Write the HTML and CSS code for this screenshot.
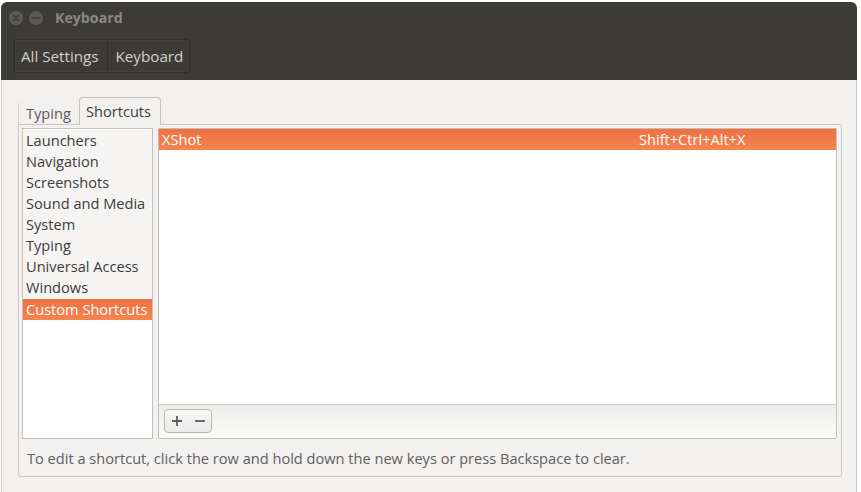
FILE: index.html
```html
<!DOCTYPE html>
<html lang="en">
<head>
<meta charset="utf-8">
<title>Keyboard</title>
<link rel="stylesheet" href="styles.css">
</head>
<body>
<div class="window">
  <header class="header">
    <div class="titlebar">
      <span class="wbtn" aria-label="Close">
        <svg width="14" height="14" viewBox="0 0 14 14"><path d="M4.5 4.5 L9.5 9.5 M9.5 4.5 L4.5 9.5" stroke="#3c3b37" stroke-width="1.6" stroke-linecap="round"/></svg>
      </span>
      <span class="wbtn" aria-label="Minimize">
        <svg width="14" height="14" viewBox="0 0 14 14"><path d="M3.5 7 L10.5 7" stroke="#3c3b37" stroke-width="1.6" stroke-linecap="round"/></svg>
      </span>
      <span class="title">Keyboard</span>
    </div>
    <div class="toolbar">
      <div class="crumbs">
        <span class="crumb">All Settings</span>
        <span class="crumb">Keyboard</span>
      </div>
    </div>
  </header>
  <main class="body">
    <div class="tabs">
      <span class="tab">Typing</span>
      <span class="tab active">Shortcuts</span>
    </div>
    <section class="page">
      <div class="content">
        <div class="sections">
          <div class="sec">Launchers</div>
          <div class="sec">Navigation</div>
          <div class="sec">Screenshots</div>
          <div class="sec">Sound and Media</div>
          <div class="sec">System</div>
          <div class="sec">Typing</div>
          <div class="sec">Universal Access</div>
          <div class="sec">Windows</div>
          <div class="sec-sep"></div>
          <div class="sec selected">Custom Shortcuts</div>
        </div>
        <div class="shortcuts">
          <div class="list">
            <div class="row selected"><span>XShot</span><span>Shift+Ctrl+Alt+X</span></div>
          </div>
          <div class="list-toolbar">
            <div class="btns">
              <span class="btn" aria-label="Add">
                <svg width="12" height="12" viewBox="0 0 12 12"><path d="M6 1 L6 11 M1 6 L11 6" stroke="#5c5c5c" stroke-width="1.8"/></svg>
              </span>
              <span class="btn" aria-label="Remove">
                <svg width="12" height="12" viewBox="0 0 12 12"><path d="M1 6 L11 6" stroke="#5c5c5c" stroke-width="1.8"/></svg>
              </span>
            </div>
          </div>
        </div>
      </div>
      <p class="hint">To edit a shortcut, click the row and hold down the new keys or press Backspace to clear.</p>
    </section>
  </main>
</div>
</body>
</html>
```

FILE: styles.css
```css
* { box-sizing: border-box; }
html, body {
  margin: 0;
  padding: 0;
  background: #ffffff;
  font-family: "Open Sans", "Noto Sans", sans-serif;
  font-size: 14.6px;
  color: #3c3c3c;
}
.window {
  margin: 2px 0 0 1px;
  width: 856px;
  height: 490px;
  display: flex;
  flex-direction: column;
}
.header {
  height: 78px;
  background: #3c3b37;
  border-radius: 6px 6px 0 0;
  display: flex;
  flex-direction: column;
}
.titlebar {
  height: 37px;
  display: flex;
  align-items: center;
  padding: 0 0 6px 8px;
}
.wbtn {
  width: 14px;
  height: 14px;
  border-radius: 50%;
  background: #5b5a56;
  display: flex;
  margin-right: 6px;
}
.title {
  margin-left: 6px;
  font-weight: bold;
  color: #8c8983;
  font-size: 14.2px;
}
.toolbar {
  display: flex;
  padding-left: 13px;
}
.crumbs {
  height: 34px;
  display: flex;
  border: 1px solid #302f2c;
  border-radius: 3px;
  box-shadow: inset 0 0 0 1px rgba(255,255,255,0.03);
}
.crumb {
  display: flex;
  align-items: center;
  padding: 0 8px 0 6px;
  color: #d3cfc7;
  font-size: 15.2px;
  padding-bottom: 1px;
}
.crumb + .crumb {
  border-left: 1px solid #302f2c;
  padding: 0 6px 1px 8px;
}
.body {
  flex: 1;
  background: #f2f1f0;
  border-left: 1px solid #d3d0cb;
  border-right: 1px solid #c9c6c1;
  padding: 17px 0 0 16px;
  display: flex;
  flex-direction: column;
}
.tabs {
  height: 27px;
  display: flex;
  align-items: flex-end;
}
.tab {
  height: 21px;
  width: 61px;
  padding: 0 0 1px 7px;
  border-left: 1px solid #d5d2cd;
  display: flex;
  align-items: center;
  color: #5a5a5a;
}
.tab.active {
  position: relative;
  height: 28px;
  width: 82px;
  margin-bottom: -1px;
  padding: 0 0 2px 6px;
  border: 1px solid #c5c2bd;
  border-bottom: none;
  border-radius: 4px 4px 0 0;
  background: #f2f1f0;
  color: #3c3c3c;
}
.page {
  width: 824px;
  height: 353px;
  border: 1px solid #c9c6c1;
  border-radius: 0 3px 3px 3px;
  padding: 3px 4px 0 3px;
  display: flex;
  flex-direction: column;
}
.content {
  height: 311px;
  display: flex;
  gap: 5px;
}
.sections {
  width: 131px;
  border: 1px solid #c2bfba;
  background: #ffffff;
  padding-top: 1px;
  display: flex;
  flex-direction: column;
}
.sec {
  height: 21px;
  line-height: 20px;
  padding-left: 3px;
  background: #f5f4f3;
  white-space: nowrap;
}
.sec-sep {
  height: 1px;
  background: #fbfbfb;
}
.sec.selected, .row.selected {
  background: linear-gradient(#ee7142, #f5844f);
  color: #ffffff;
}
.shortcuts {
  flex: 1;
  border: 1px solid #c2bfba;
  border-radius: 0 0 2px 2px;
  display: flex;
  flex-direction: column;
}
.list {
  flex: 1;
  background: #ffffff;
}
.row {
  height: 21px;
  line-height: 20px;
  padding-left: 3px;
  display: grid;
  grid-template-columns: 477px 1fr;
}
.list-toolbar {
  height: 34px;
  border-top: 1px solid #cfccc7;
  background: linear-gradient(#eeedeb, #fbfbfa);
  padding: 4px 0 0 5px;
}
.btns {
  display: flex;
  width: 48px;
  height: 24px;
  border: 1px solid #bdbab5;
  border-radius: 4px;
  background: linear-gradient(#f7f6f5, #ecebe9);
}
.btn {
  width: 23px;
  display: flex;
  align-items: center;
  justify-content: center;
}
.hint {
  margin: 0;
  padding: 9px 0 0 5px;
  line-height: 20px;
  color: #606060;
  white-space: nowrap;
}
```
